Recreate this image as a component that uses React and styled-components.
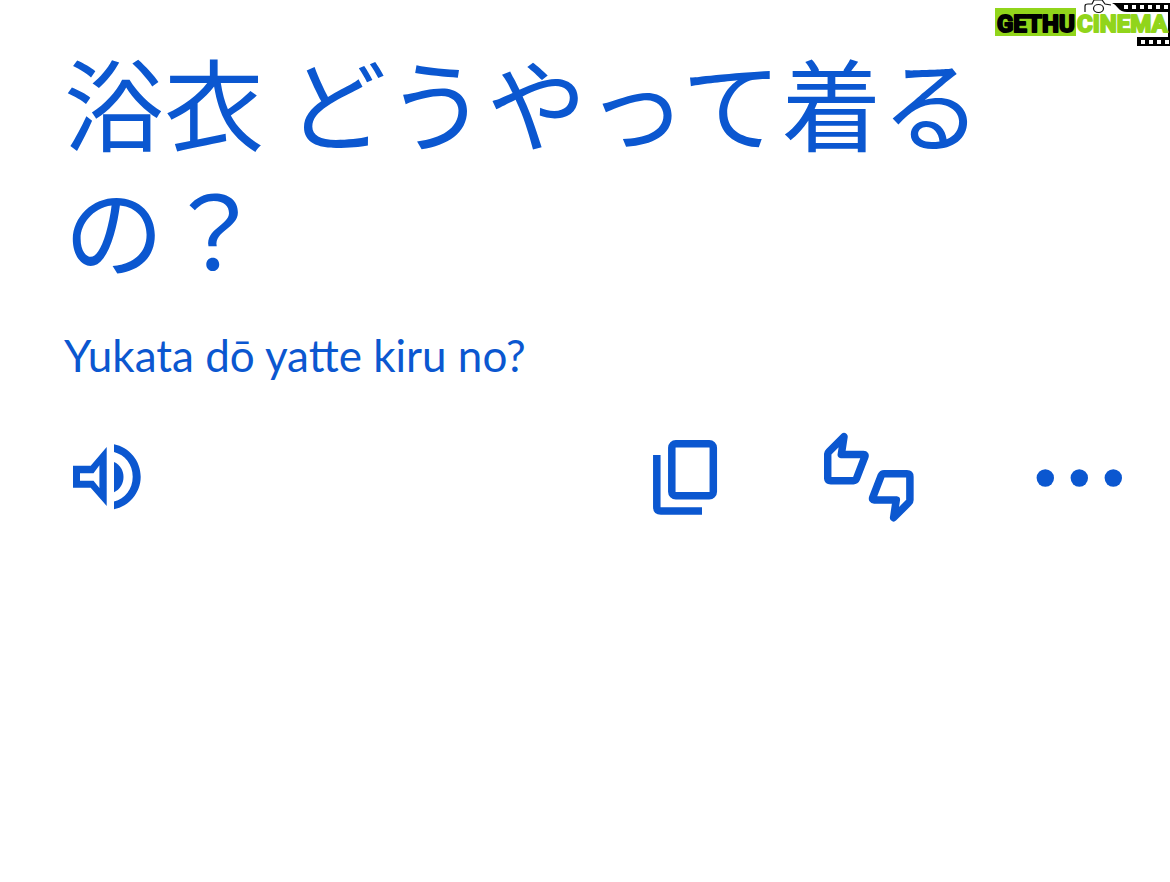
import React from 'react';
import styled, { createGlobalStyle } from 'styled-components';

const GlobalStyle = createGlobalStyle`
  * { box-sizing: border-box; }
  body { margin: 0; background: #fff; }
`;

const Page = styled.main`
  position: relative;
  min-height: 100vh;
  padding: 38px 40px 40px 64px;
  color: #0b57d0;
  background: #fff;
`;

const Translation = styled.h1`
  margin: 0;
  padding-right: 64px;
  font: 400 100px/126px 'Noto Sans CJK JP', sans-serif;
`;

const Romanization = styled.p`
  margin: 33px 0 0;
  font: 400 44px/64px Lato, 'Noto Sans', sans-serif;
`;

const Toolbar = styled.div`
  display: flex;
  align-items: center;
  justify-content: space-between;
  margin-top: 45px;
  padding: 0 8px 0 9px;
`;

const ToolGroup = styled.div`
  display: flex;
  align-items: center;
  gap: 106px;
`;

const IconButton = styled.button`
  display: flex;
  padding: 0;
  border: 0;
  background: none;
  color: inherit;
  cursor: pointer;
`;

const MoreButton = styled(IconButton)`
  margin-left: 16px;
`;

const Icon = styled.svg`
  display: block;
  fill: none;
  stroke: none;
`;

const Watermark = styled.svg`
  position: absolute;
  top: 0;
  right: 0;
`;

const LogoText = styled.text`
  font: 700 24px Roboto, sans-serif;
  fill: ${(p) => p.$color};
  stroke: ${(p) => p.$color};
  stroke-width: 2px;
  stroke-linejoin: round;
`;

const SpeakerIcon = () => (
  <Icon width="68" height="90" viewBox="73 432 68 90" aria-hidden="true">
    <path
      fill="currentColor"
      fillRule="evenodd"
      d="M73 465.7H90.7L106.7 447V506L90.7 487.7H73ZM80 473.2V480.7H93.5L99.4 488V465.3L93.5 473.2Z"
    />
    <path fill="currentColor" d="M114 462C120 464.500 123.500 470.500 123.500 477S120 489.700 114 492.200Z" />
    <path
      fill="currentColor"
      d="M114 444.300C129 447.300 140.700 460.500 140.700 476.700S129 506.200 114 509.200V501.500C125 498.500 132.700 489 132.700 476.700S125 454.900 114 452Z"
    />
  </Icon>
);

const CopyIcon = () => (
  <Icon width="65" height="90" viewBox="653 432 65 90" aria-hidden="true">
    <rect x="671.800" y="443.800" width="41.500" height="52" rx="4" stroke="currentColor" strokeWidth="7.500" />
    <path d="M656.800 455V507Q656.800 511 660.800 511H702" stroke="currentColor" strokeWidth="7.500" />
  </Icon>
);

const thumb = 'M827.700 454.500Q827.700 453 829 451.700L844 436.700L841.300 454.500H863.500Q865.600 454.500 864.900 456.700L856.500 478.500Q855.500 480.700 853.500 480.700H830.700Q827.700 480.700 827.700 477.700Z';

const ThumbsIcon = () => (
  <Icon width="90" height="90" viewBox="824 432 90 90" aria-hidden="true">
    <g stroke="currentColor" strokeWidth="7.500" strokeLinejoin="round">
      <path d={thumb} />
      <path d={thumb} transform="rotate(180 868.800 477.200)" />
    </g>
  </Icon>
);

const MoreIcon = () => (
  <Icon width="86" height="90" viewBox="1036 432 86 90" aria-hidden="true">
    <g fill="currentColor">
      <circle cx="1045.300" cy="478" r="8.700" />
      <circle cx="1079.300" cy="478" r="8.700" />
      <circle cx="1113.300" cy="478" r="8.700" />
    </g>
  </Icon>
);

const holes = (from, to, y) => {
  const out = [];
  for (let x = from; x < to; x += 8) {
    out.push(<rect key={`${x}-${y}`} x={x} y={y} width="4" height="4" fill="#fff" />);
  }
  return out;
};

const CinemaLogo = () => (
  <Watermark width="176" height="48" viewBox="994 0 176 48" role="img" aria-label="GETHU CINEMA">
    <path d="M1112 3H1170V46H1137V37H1168V12H1127Q1121 12 1118 8T1112 3Z" fill="#000" />
    {holes(1124, 1168, 5)}
    {holes(1141, 1168, 40)}
    <g fill="#fff" stroke="#111" strokeWidth="1.2">
      <path d="M1085 12V6Q1085 4 1088 4H1092L1094 0H1102L1105 4L1111 5" />
      <ellipse cx="1098.500" cy="8.500" rx="5" ry="4" />
    </g>
    <rect x="995" y="8" width="81" height="28" fill="#91d51b" />
    <LogoText x="997" y="32" $color="#000">GETHU</LogoText>
    <LogoText x="1077" y="32" $color="#91d51b">CINEMA</LogoText>
  </Watermark>
);

export default function App() {
  return (
    <>
      <GlobalStyle />
      <Page>
        <CinemaLogo />
        <Translation lang="ja">浴衣 どうやって着るの？</Translation>
        <Romanization>Yukata dō yatte kiru no?</Romanization>
        <Toolbar>
          <IconButton type="button" aria-label="Listen"><SpeakerIcon /></IconButton>
          <ToolGroup>
            <IconButton type="button" aria-label="Copy"><CopyIcon /></IconButton>
            <IconButton type="button" aria-label="Rate this translation"><ThumbsIcon /></IconButton>
            <MoreButton type="button" aria-label="More options"><MoreIcon /></MoreButton>
          </ToolGroup>
        </Toolbar>
      </Page>
    </>
  );
}
